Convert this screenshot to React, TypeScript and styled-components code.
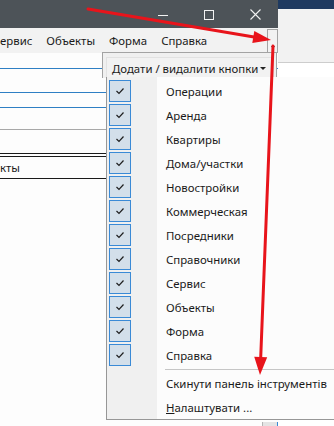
import React from "react";
import styled, { createGlobalStyle } from "styled-components";

const GlobalStyle = createGlobalStyle`
  html, body {
    margin: 0;
    padding: 0;
    background: #ffffff;
  }
  body {
    font-family: "Noto Sans", "Liberation Sans", sans-serif;
    font-size: 11.4px;
    color: #1a1a1a;
  }
  #root {
    width: 334px;
    height: 426px;
    overflow: hidden;
  }
`;

const menuItems = ["ервис", "Объекты", "Форма", "Справка"];

const toolbarButtons = [
  "Операции",
  "Аренда",
  "Квартиры",
  "Дома/участки",
  "Новостройки",
  "Коммерческая",
  "Посредники",
  "Справочники",
  "Сервис",
  "Объекты",
  "Форма",
  "Справка",
];

// background form lines: height above the line, line colour
const formLines: { h: number; color: string; text?: string }[] = [
  { h: 15, color: "#2f7fc4" },
  { h: 23, color: "#2f7fc4" },
  { h: 14, color: "#2f7fc4" },
  { h: 21, color: "#a8a8a8" },
  { h: 23, color: "#1a1a1a" },
  { h: 2, color: "#1a1a1a" },
  { h: 21, color: "#1a1a1a", text: "кты" },
];

const App = () => {
  return (
    <>
      <GlobalStyle />
      <Page>
        <Window>
          <TitleBar>
            <CaptionButton>
              <svg width="10" height="10" viewBox="0 0 10 10">
                <line x1="0" y1="5.5" x2="10" y2="5.5" stroke="#f2f2f2" strokeWidth="1" />
              </svg>
            </CaptionButton>
            <CaptionButton>
              <svg width="10" height="10" viewBox="0 0 10 10">
                <rect x="0.5" y="0.5" width="9" height="9" fill="none" stroke="#f2f2f2" strokeWidth="1" />
              </svg>
            </CaptionButton>
            <CaptionButton>
              <svg width="11" height="11" viewBox="0 0 11 11">
                <path d="M0.5 0.5 L10.5 10.5 M10.5 0.5 L0.5 10.5" stroke="#f2f2f2" strokeWidth="1.1" />
              </svg>
            </CaptionButton>
          </TitleBar>

          <MenuBar>
            <MenuItems>
              {menuItems.map((m) => (
                <MenuItem key={m}>{m}</MenuItem>
              ))}
            </MenuItems>
            <Chevron>
              <SmallTriangle />
            </Chevron>
          </MenuBar>

          <Form>
            {formLines.map((l, i) => (
              <FormLine key={i} $h={l.h} $color={l.color}>
                {l.text}
              </FormLine>
            ))}
            <FormSpacer />
            <FormFooter>
              <FooterTab />
            </FormFooter>
          </Form>
        </Window>

        <RightPane>
          <NavyStrip />
          <SideToolbar />
        </RightPane>

        <OverflowBox>
          <HeaderItem>
            <span>Додати / видалити кнопки</span>
            <HeaderTriangle />
          </HeaderItem>
        </OverflowBox>

        <DropList>
          {toolbarButtons.map((b) => (
            <Row key={b}>
              <CheckCell>
                <CheckBox>
                  <svg width="10" height="8" viewBox="0 0 10 8">
                    <path d="M1.5 4 L4 6.5 L8.5 1.5" fill="none" stroke="#1f1f1f" strokeWidth="1.2" />
                  </svg>
                </CheckBox>
              </CheckCell>
              <Label>{b}</Label>
            </Row>
          ))}
          <Separator />
          <Row>
            <CheckCell />
            <Label>Скинути панель інструментів</Label>
          </Row>
          <Row>
            <CheckCell />
            <Label>
              <u>Н</u>алаштувати ...
            </Label>
          </Row>
        </DropList>

        <Arrows width="334" height="426" viewBox="0 0 334 426">
          <line x1="88" y1="9" x2="254" y2="37" stroke="#e8141b" strokeWidth="3" strokeLinecap="round" />
          <polygon points="271,40 254.3,31.1 252.3,42.9" fill="#e8141b" />
          <line x1="273" y1="46" x2="260.7" y2="358" stroke="#e8141b" strokeWidth="3" strokeLinecap="round" />
          <polygon points="260,375 267.2,357.3 254.2,356.7" fill="#e8141b" />
        </Arrows>
      </Page>
    </>
  );
};

export default App;

const Page = styled.div`
  position: relative;
  width: 334px;
  height: 426px;
  display: flex;
  overflow: hidden;
`;

const Window = styled.div`
  width: 278px;
  flex: none;
  display: flex;
  flex-direction: column;
`;

const TitleBar = styled.div`
  height: 28px;
  background: #4d5358;
  display: flex;
  justify-content: flex-end;
`;

const CaptionButton = styled.div`
  width: 46px;
  display: flex;
  align-items: center;
  justify-content: center;
  padding-top: 1px;
`;

const MenuBar = styled.div`
  height: 25px;
  background: #f2f2f2;
  display: flex;
`;

const MenuItems = styled.div`
  flex: 1;
  display: flex;
  gap: 14px;
  padding-top: 5px;
  white-space: nowrap;
  overflow: hidden;
`;

const MenuItem = styled.span`
  font-size: 11.4px;
  color: #1a1a1a;
`;

const Chevron = styled.div`
  width: 11px;
  margin-top: 1px;
  box-sizing: border-box;
  border: 1px solid #a3a3a3;
  border-bottom: none;
  background: #f2f2f2;
  display: flex;
  justify-content: center;
  padding-top: 16px;
`;

const SmallTriangle = styled.div`
  width: 0;
  height: 0;
  border-left: 2.5px solid transparent;
  border-right: 2.5px solid transparent;
  border-top: 3px solid #222;
`;

const Form = styled.div`
  flex: 1;
  display: flex;
  flex-direction: column;
  background: #fdfdfd;
`;

const FormLine = styled.div<{ $h: number; $color: string }>`
  height: ${(p) => p.$h}px;
  border-bottom: 1px solid ${(p) => p.$color};
  font-size: 11.4px;
  line-height: ${(p) => p.$h}px;
`;

const FormSpacer = styled.div`
  flex: 1;
`;

const FormFooter = styled.div`
  display: flex;
  justify-content: flex-end;
`;

const FooterTab = styled.div`
  width: 14px;
  height: 4px;
  background: #e4e4e4;
  border-left: 1px solid #b5b5b5;
  border-right: 1px solid #3a8ad6;
`;

const RightPane = styled.div`
  flex: 1;
  display: flex;
  flex-direction: column;
`;

const NavyStrip = styled.div`
  height: 9px;
  background: #1f3a60;
`;

const SideToolbar = styled.div`
  height: 53px;
  background: #f2f2f2;
  border-bottom: 1px solid #cdcdcd;
`;

const OverflowBox = styled.div`
  position: absolute;
  left: 102px;
  top: 52px;
  width: 175px;
  height: 26px;
  box-sizing: border-box;
  border: 1px solid #a3a3a3;
  border-bottom: none;
  background: #f0f0f0;
  padding: 4px 2px 0 3px;
`;

const HeaderItem = styled.div`
  height: 21px;
  box-sizing: border-box;
  border: 1px solid #e2e2e2;
  border-bottom: none;
  background: #f2f2f2;
  display: flex;
  align-items: center;
  justify-content: space-between;
  padding: 0 7px 0 5px;
  font-size: 11.4px;
  white-space: nowrap;
`;

const HeaderTriangle = styled.div`
  width: 0;
  height: 0;
  border-left: 3px solid transparent;
  border-right: 3px solid transparent;
  border-top: 3px solid #222;
`;

const DropList = styled.div`
  position: absolute;
  left: 106px;
  top: 77px;
  width: 240px;
  border-left: 1px solid #979797;
  border-bottom: 1px solid #979797;
  background: linear-gradient(to right, #f0f0f0 50px, #fcfcfc 50px);
  padding-top: 2px;
`;

const Row = styled.div`
  height: 24px;
  display: flex;
  align-items: center;
`;

const CheckCell = styled.div`
  width: 24px;
  height: 22px;
  flex: none;
  display: flex;
  justify-content: flex-end;
`;

const CheckBox = styled.div`
  width: 22px;
  height: 22px;
  box-sizing: border-box;
  border: 1px solid #3a8ad6;
  background: #d3dfea;
  display: flex;
  align-items: center;
  justify-content: center;
`;

const Label = styled.span`
  margin-left: 35px;
  font-size: 11.4px;
  color: #1a1a1a;
  white-space: nowrap;
`;

const Separator = styled.div`
  height: 4px;
  box-sizing: border-box;
  margin-left: 58px;
  padding-top: 2px;
  &::before {
    content: "";
    display: block;
    border-top: 1px solid #c6c6c6;
  }
`;

const Arrows = styled.svg`
  position: absolute;
  left: 0;
  top: 0;
  pointer-events: none;
`;
